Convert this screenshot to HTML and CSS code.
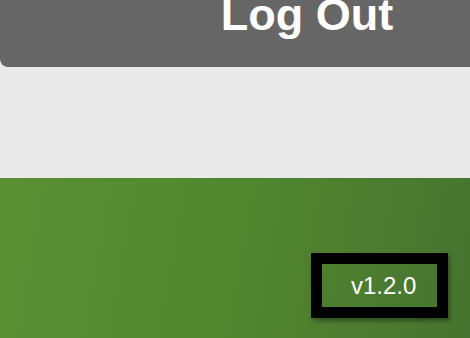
FILE: index.html
```html
<!DOCTYPE html>
<html lang="en">
<head>
    <meta charset="UTF-8">
    <meta name="viewport" content="width=device-width, initial-scale=1.0">
    <title>Settings</title>
    <link rel="stylesheet" href="styles.css">
</head>
<body>
    <div class="top">
      <div class="logout" id="logout">Log Out</div>
    </div>
    <div class="spacer"></div>
    <div class="footer">
      <div class="version">v1.2.0</div>
    </div>
</body>
</html>
```

FILE: styles.css
```css
html, body {
    margin: 0;
    padding: 0;
    height: 100%;
    overflow: hidden;
  }

  body {
    font-family: "Liberation Sans", Arial, sans-serif;
    background-color: #e9e9e9;
  }

  .top {
    height: 67px;
    overflow: hidden;
  }

  .logout {
    width: 614px;
    height: 67px;
    border-radius: 0 0 8px 8px;
    background-color: #666666;
    color: #fff;
    font-weight: bold;
    font-size: 45px;
    line-height: 29px;
    text-align: center;
    cursor: pointer;
  }

  .spacer {
    height: 111px;
  }

  .footer {
    height: 160px;
    background: linear-gradient(100deg, #5a9034 0%, #52862f 50%, #467430 100%);
    display: flex;
    justify-content: flex-end;
    align-items: flex-start;
    padding: 75px 22px 0 0;
    box-sizing: border-box;
  }

  .version {
    width: 86px;
    height: 43px;
    padding-left: 29px;
    border: 11px solid #000;
    box-shadow: 2px 3px 4px rgba(0, 0, 0, 0.35);
    color: #fff;
    font-size: 24px;
    line-height: 44px;
  }
```
